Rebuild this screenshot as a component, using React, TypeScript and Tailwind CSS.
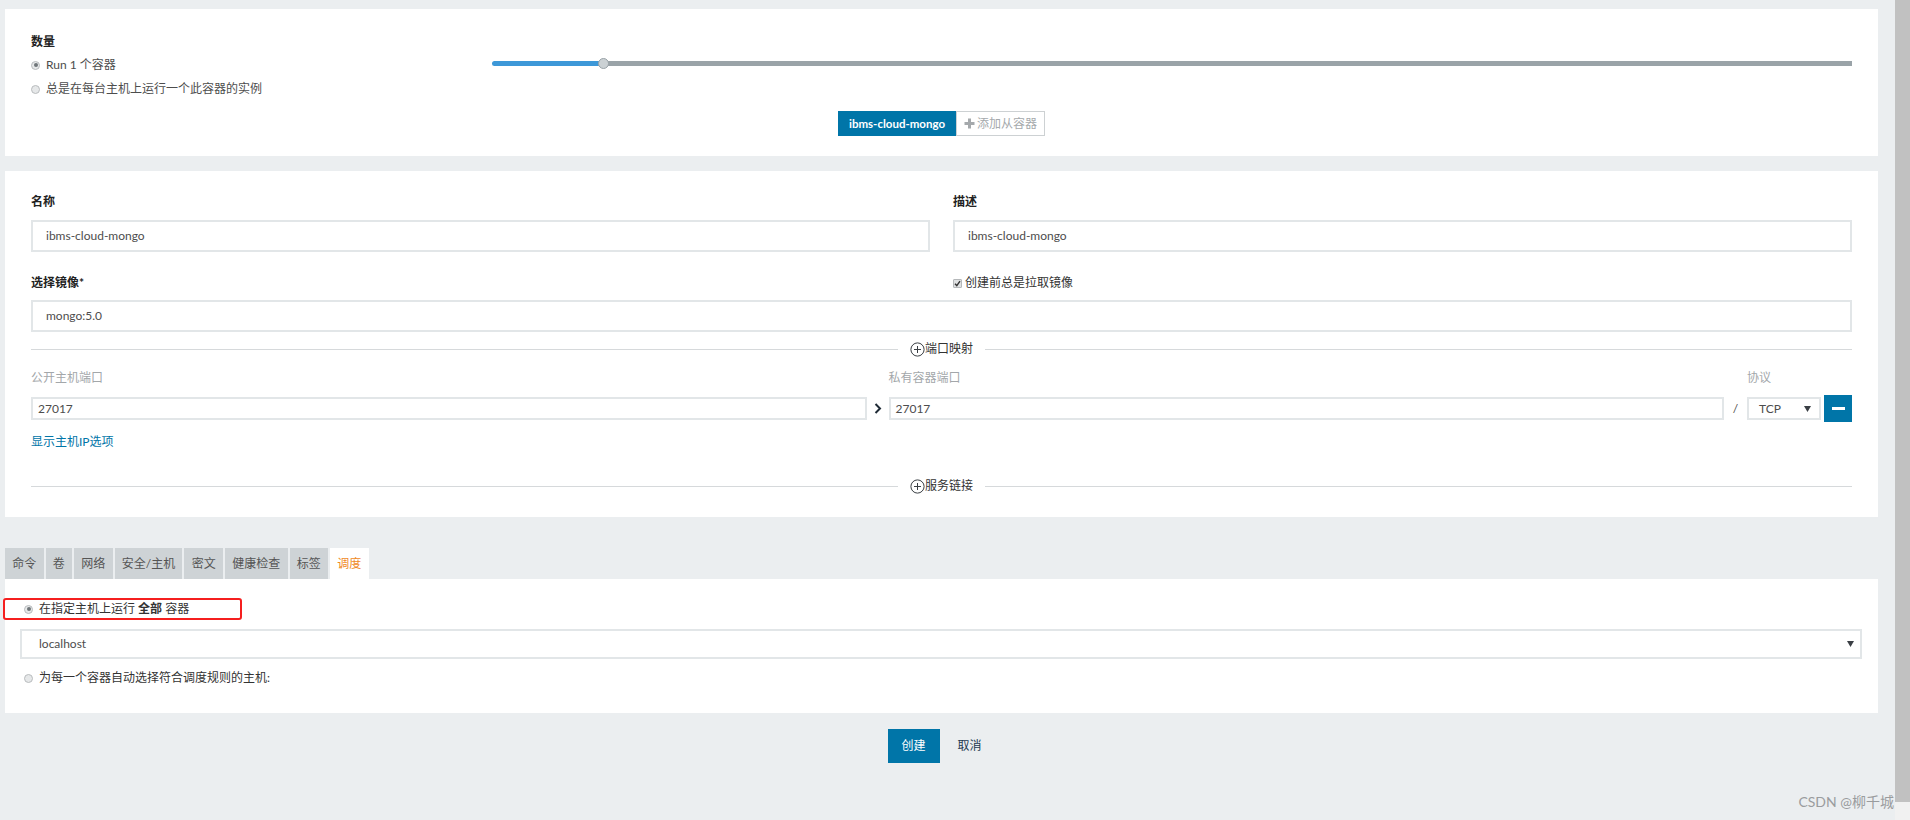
import React from "react";

function Radio({ checked }: { checked?: boolean }) {
  return (
    <span className="flex h-[9px] w-[9px] shrink-0 items-center justify-center rounded-full border border-[#b9bcbe] bg-[#e6e8e9]">
      {checked && <span className="h-[4px] w-[4px] rounded-full bg-[#6f7579]" />}
    </span>
  );
}

function CirclePlus() {
  return (
    <svg width="15" height="15" viewBox="0 0 15 15" className="shrink-0">
      <circle cx="7.5" cy="7.5" r="6.6" fill="none" stroke="#3a3f44" strokeWidth="1" />
      <path d="M7.5 4v7M4 7.5h7" stroke="#3a3f44" strokeWidth="1" />
    </svg>
  );
}

function Divider({ label }: { label: string }) {
  return (
    <div className="flex h-[16px] items-center">
      <div className="h-px flex-1 bg-[#d6d9db]" />
      <div className="flex items-center px-[12px] text-[12px] text-[#333]">
        <CirclePlus />
        <span>{label}</span>
      </div>
      <div className="h-px flex-1 bg-[#d6d9db]" />
    </div>
  );
}

function Caret() {
  return (
    <svg width="7" height="6" viewBox="0 0 7 6">
      <path d="M0 0h7L3.5 6z" fill="#3a3f44" />
    </svg>
  );
}

const inputCls =
  "flex items-center border-2 border-[#e2e6e8] bg-white text-[12px] text-[#4d4d4d]";

export default function App() {
  const tabs = ["命令", "卷", "网络", "安全/主机", "密文", "健康检查", "标签"];
  return (
    <div className="relative flex h-[820px] w-[1910px] overflow-hidden bg-[#ebeef0] font-[Lato,'Noto_Sans_CJK_SC',sans-serif]">
      <div className="flex-1 pl-[5px] pr-[17px] pt-[9px]">
        {/* Panel 1 */}
        <div className="bg-white px-[26px] pb-[20px] pt-[25px]">
          <div className="flex">
            <div className="w-[461px]">
              <div className="h-[16px] text-[12px] font-bold leading-[16px] text-[#222]">数量</div>
              <div className="mt-[3px]">
                <div className="flex h-[24px] items-center gap-[6px] text-[12px] text-[#4d4d4d]">
                  <Radio checked />
                  <span>Run 1 个容器</span>
                </div>
                <div className="flex h-[24px] items-center gap-[6px] text-[12px] text-[#4d4d4d]">
                  <Radio />
                  <span>总是在每台主机上运行一个此容器的实例</span>
                </div>
              </div>
            </div>
            <div className="relative mt-[24px] h-[10px] flex-1">
              <div className="absolute left-0 right-0 top-[3px] flex h-[5px]">
                <div className="w-[111px] rounded-l-[3px] bg-[#3d98d8]" />
                <div className="flex-1 bg-[#9aa3a8]" />
              </div>
              <div className="absolute left-[106px] top-0 h-[11px] w-[11px] rounded-full border border-[#99a2a7] bg-[#cbd1d4]" />
            </div>
          </div>
          <div className="mt-[10px] flex justify-center">
            <div className="flex h-[25px] items-center bg-[#0075a8] px-[11px] text-[11.5px] font-bold text-white">
              ibms-cloud-mongo
            </div>
            <div className="flex h-[25px] items-center gap-[2px] border border-[#cdd1d3] bg-white px-[7px] text-[12px] text-[#a5a9ac]">
              <svg width="11" height="11" viewBox="0 0 11 11">
                <path d="M5.5 0.5v10M0.5 5.5h10" stroke="#a5a9ac" strokeWidth="3" />
              </svg>
              <span>添加从容器</span>
            </div>
          </div>
        </div>

        {/* Panel 2 */}
        <div className="mt-[15px] bg-white px-[26px] pb-[23px] pt-[23px]">
          <div className="grid grid-cols-2 gap-x-[23px]">
            <div>
              <div className="h-[16px] text-[12px] font-bold leading-[16px] text-[#222]">名称</div>
              <div className={`${inputCls} mt-[10px] h-[32px] pl-[13px]`}>ibms-cloud-mongo</div>
            </div>
            <div>
              <div className="h-[16px] text-[12px] font-bold leading-[16px] text-[#222]">描述</div>
              <div className={`${inputCls} mt-[10px] h-[32px] pl-[13px]`}>ibms-cloud-mongo</div>
            </div>
            <div className="mt-[23px] h-[16px] text-[12px] font-bold leading-[16px] text-[#222]">选择镜像*</div>
            <div className="mt-[23px] flex h-[16px] items-center gap-[3px] text-[12px] text-[#333]">
              <span className="flex h-[9px] w-[9px] items-center justify-center rounded-[1px] border border-[#b5b8ba] bg-[#dfe1e2]">
                <svg width="7" height="7" viewBox="0 0 7 7">
                  <path d="M1 3.8l1.8 1.8L6 1.2" fill="none" stroke="#333" strokeWidth="1.4" />
                </svg>
              </span>
              <span>创建前总是拉取镜像</span>
            </div>
          </div>
          <div className={`${inputCls} mt-[9px] h-[32px] pl-[13px]`}>mongo:5.0</div>
          <div className="mt-[9px]">
            <Divider label="端口映射" />
          </div>
          <div className="mt-[13px] flex h-[16px] items-center text-[12px] text-[#a3a7aa]">
            <div className="flex-1">公开主机端口</div>
            <div className="w-[22px]" />
            <div className="flex-1">私有容器端口</div>
            <div className="w-[23px]" />
            <div className="w-[105px]">协议</div>
          </div>
          <div className="mt-[9px] flex h-[27px] items-center">
            <div className={`${inputCls} h-[23px] flex-1 pl-[5px]`}>27017</div>
            <div className="flex w-[22px] justify-center">
              <svg width="8" height="11" viewBox="0 0 8 11">
                <path d="M1.5 1l4.5 4.5L1.5 10" fill="none" stroke="#1f2b36" strokeWidth="2" />
              </svg>
            </div>
            <div className={`${inputCls} h-[23px] flex-1 pl-[5px]`}>27017</div>
            <div className="flex w-[23px] justify-center text-[12px] text-[#4d4d4d]">/</div>
            <div className={`${inputCls} h-[23px] w-[74px] justify-between pl-[10px] pr-[8px]`}>
              <span>TCP</span>
              <Caret />
            </div>
            <div className="ml-[3px] flex h-[27px] w-[28px] items-center justify-center bg-[#0075a8]">
              <div className="h-[3px] w-[13px] bg-white" />
            </div>
          </div>
          <div className="mt-[12px] h-[16px] text-[12px] leading-[16px] text-[#0075a8]">显示主机IP选项</div>
          <div className="mt-[28px]">
            <Divider label="服务链接" />
          </div>
        </div>

        {/* Tabs */}
        <div className="mt-[31px] flex h-[31px] gap-[2px]">
          {tabs.map((t) => (
            <div key={t} className="flex items-center bg-[#ced3d6] px-[7.25px] text-[12px] text-[#555]">
              {t}
            </div>
          ))}
          <div className="flex items-center bg-white px-[7.25px] text-[12px] text-[#f08a24]">调度</div>
        </div>

        {/* Panel 3 */}
        <div className="bg-white pb-[25px] pl-[15px] pr-[16px] pt-[20px]">
          <div className="relative flex h-[20px] items-center gap-[6px] pl-[4px] text-[12px] text-[#333]">
            <Radio checked />
            <span>
              在指定主机上运行 <b className="font-bold">全部</b> 容器
            </span>
            <div className="absolute left-[-17px] top-[-1px] h-[22px] w-[239px] rounded-[3px] border-2 border-[#f51f1f]" />
          </div>
          <div className={`${inputCls} mt-[10px] h-[30px] justify-between pl-[17px] pr-[6px]`}>
            <span>localhost</span>
            <Caret />
          </div>
          <div className="mt-[9px] flex h-[20px] items-center gap-[6px] pl-[4px] text-[12px] text-[#333]">
            <Radio />
            <span>为每一个容器自动选择符合调度规则的主机:</span>
          </div>
        </div>

        {/* Buttons */}
        <div className="mt-[16px] flex justify-center gap-[4px]">
          <div className="flex h-[34px] w-[52px] items-center justify-center bg-[#0075a8] text-[12px] text-white">创建</div>
          <div className="flex h-[34px] w-[52px] items-center justify-center text-[12px] text-[#1e3a4f]">取消</div>
        </div>
      </div>

      {/* Scrollbar */}
      <div className="flex w-[15px] flex-col bg-[#f1f1f1]">
        <div className="h-[802px] w-full bg-[#c1c1c1]" />
      </div>

      <div className="absolute bottom-[8px] right-[16px] text-[14px] text-[#9a9c9e]">CSDN @柳千城</div>
    </div>
  );
}
